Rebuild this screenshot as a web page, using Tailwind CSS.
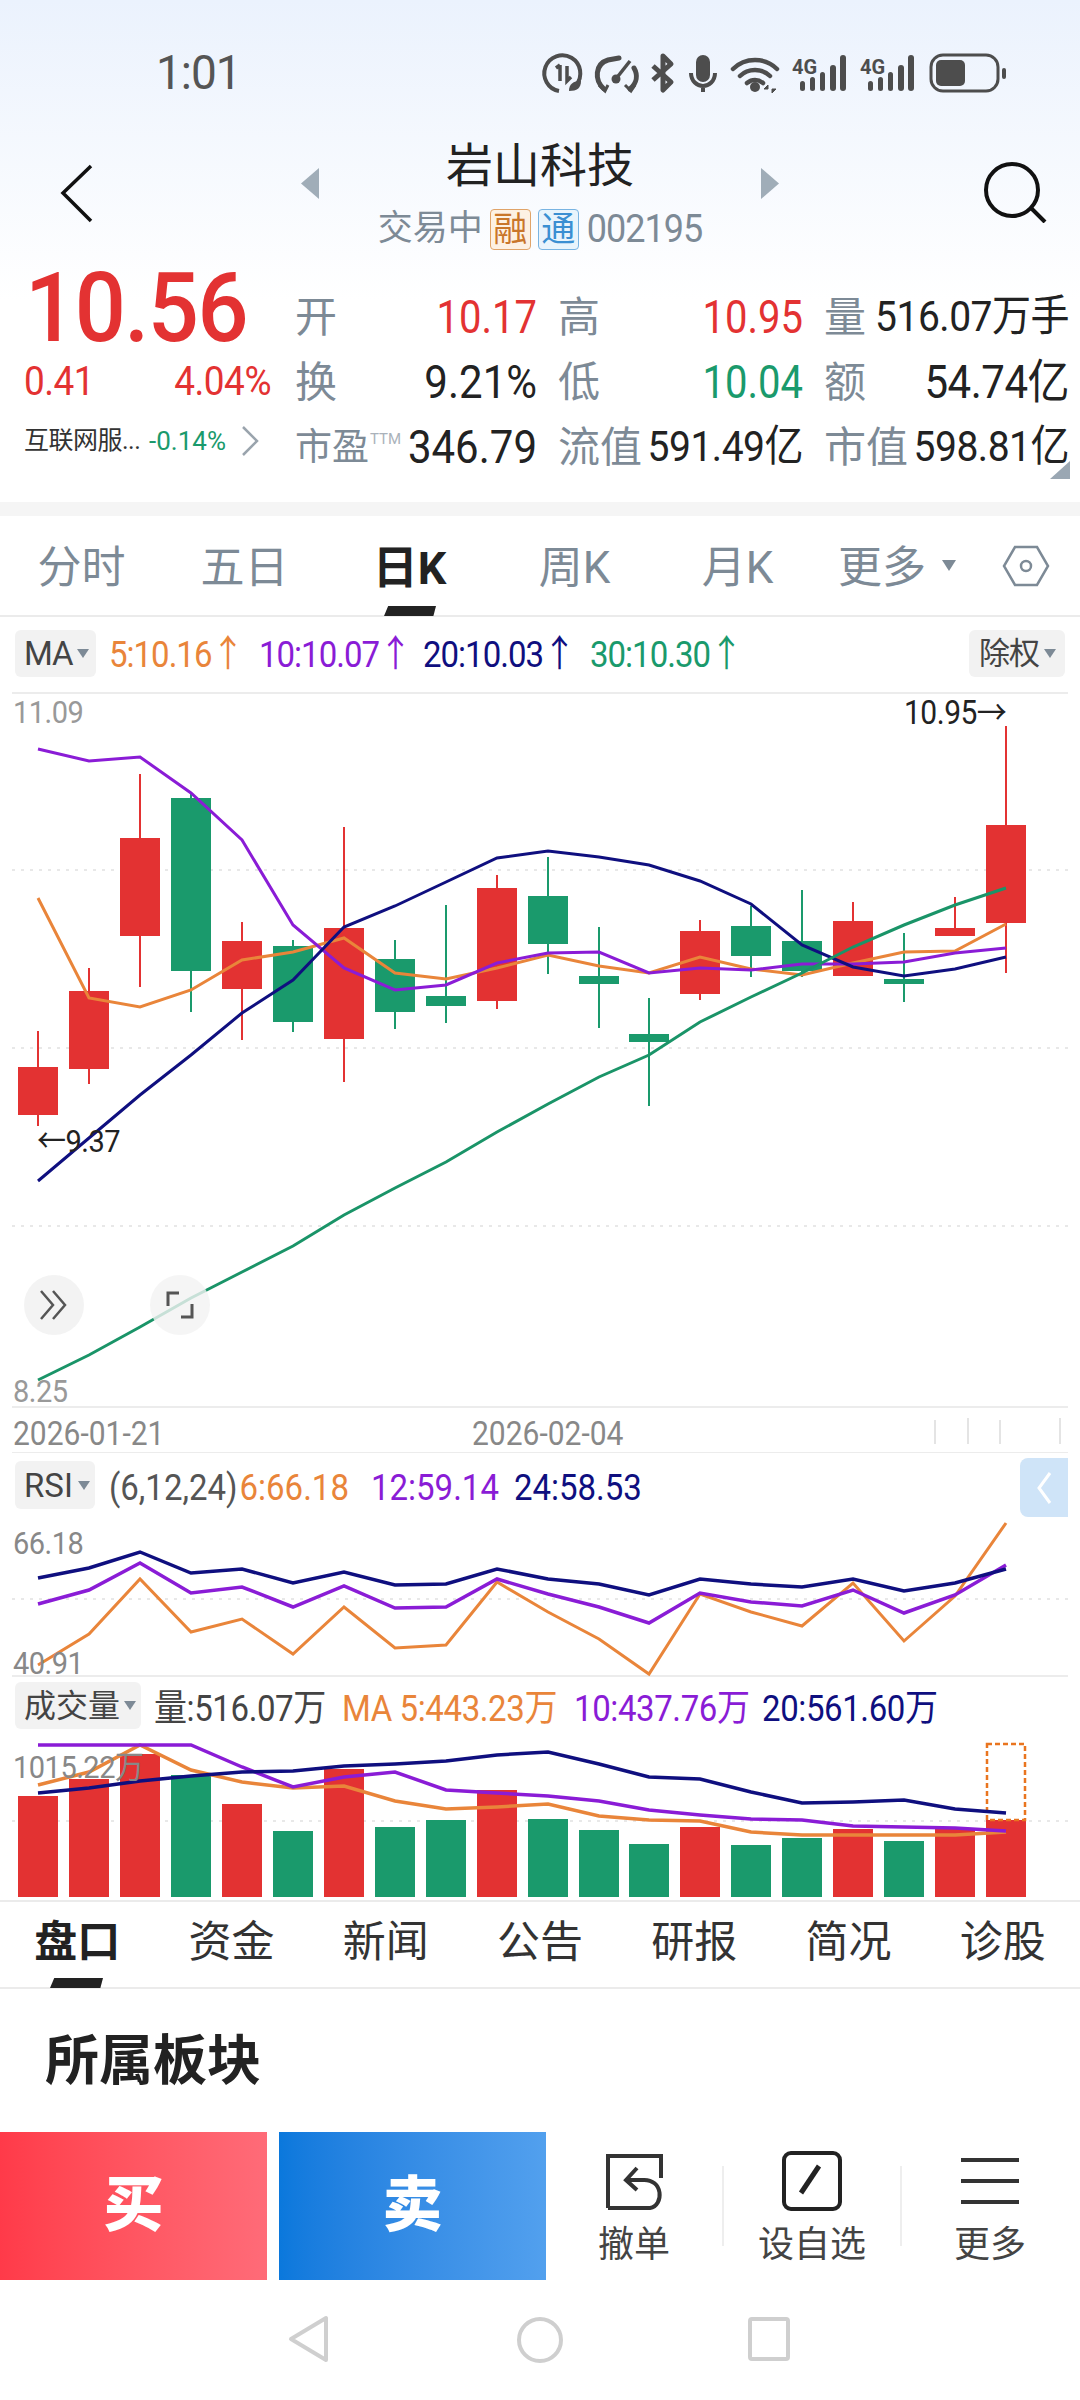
<!DOCTYPE html>
<html><head><meta charset="utf-8"><script src="https://cdn.jsdelivr.net/npm/@tailwindcss/browser@4"></script></head>
<body class="bg-white">
<div class="w-[1080px] h-[2400px] overflow-hidden bg-white text-[#222] font-['Roboto','Noto_Sans_CJK_SC',sans-serif]">

<!-- header -->
<div class="h-[300px] bg-gradient-to-b from-[#ebf2fd] to-white">
  <div class="h-[146px] flex items-center pb-[3px] relative">
    <div class="ml-[156px] text-[46px] leading-none text-[#555] tracking-[-1px] scale-y-[1.06]">1:01</div>
    <svg class="absolute left-[540px] top-[40px]" width="480" height="70" viewBox="540 40 480 70" fill="none" stroke="#4d4d4d">
      <path d="M576 85a18 18 0 1 0-17 6" stroke-width="4"/><path d="M560 65l-4 3M560 65v16M567 66v15l4-4" stroke-width="3.5"/><path d="M569 91c0-7 4-10 12-10 0 7-4 10-12 10z" fill="#4d4d4d" stroke="none"/>
      <path d="M604 89c-10-9-9-25 4-29l11-2M634 68c4 7 3 15-4 21" stroke-width="5" stroke-linecap="round"/><path d="M615 80l15-19" stroke-width="3.500"/><circle cx="616" cy="79" r="4.500" fill="#4d4d4d" stroke="none"/><path d="M599 85l6 6 3-6M625 85l6 6 4-6" stroke-width="3"/>
      <path d="M653 66l18 16-8 8V56l8 8-18 16" stroke-width="5" stroke-linejoin="round"/>
      <rect x="696" y="55" width="14" height="27" rx="7" fill="#4d4d4d" stroke="none"/><path d="M691 73c0 8 6 13 12 13s12-5 12-13M703 86v6" stroke-width="4"/>
      <path d="M733 69c12-12 32-12 44 0M740 76c8-8 22-8 30 0M747 83c5-4 11-4 16 0" stroke-width="4.5" stroke-linecap="round"/><circle cx="755" cy="87" r="5" fill="#4d4d4d" stroke="none"/><path d="M768 85l-4 4h4zM772 93l4-4h-4z" fill="#4d4d4d" stroke-width="1"/>
      <g fill="#4d4d4d" stroke="none"><rect x="800" y="81" width="5" height="10" rx="2.5"/><rect x="810" y="77" width="5" height="14" rx="2.5"/><rect x="820" y="72" width="5" height="19" rx="2.5"/><rect x="830" y="65" width="6" height="26" rx="3"/><rect x="840" y="55" width="6" height="36" rx="3"/>
      <rect x="868" y="81" width="5" height="10" rx="2.5"/><rect x="878" y="77" width="5" height="14" rx="2.5"/><rect x="888" y="72" width="5" height="19" rx="2.5"/><rect x="898" y="65" width="6" height="26" rx="3"/><rect x="908" y="55" width="6" height="36" rx="3"/>
      <text x="792" y="74" font-size="20" font-weight="700" font-family="Roboto">4G</text><text x="860" y="74" font-size="20" font-weight="700" font-family="Roboto">4G</text></g>
      <rect x="931" y="55" width="67" height="36" rx="12" stroke-width="3"/><rect x="936" y="60" width="29" height="26" rx="5" fill="#4d4d4d" stroke="none"/><rect x="1002" y="68" width="4" height="11" rx="2" fill="#4d4d4d" stroke="none"/>
    </svg>
  </div>
  <div class="h-[116px] relative flex flex-col items-center">
    <svg class="absolute left-[60px] top-[17px]" width="34" height="60" viewBox="0 0 34 60" fill="none" stroke="#111" stroke-width="3.5"><path d="M31 3L3 30l28 28"/></svg>
    <svg class="absolute left-[300px] top-[21px]" width="20" height="33" viewBox="0 0 20 33" fill="#a0adb8"><path d="M19 1v31L1 16.500z"/></svg>
    <svg class="absolute left-[760px] top-[21px]" width="20" height="33" viewBox="0 0 20 33" fill="#a0adb8"><path d="M1 1v31l18-15.500z"/></svg>
    <svg class="absolute left-[980px] top-[15px]" width="70" height="62" viewBox="0 0 70 62" fill="none" stroke="#111" stroke-width="4"><circle cx="32" cy="29" r="26"/><path d="M51 47l14 14"/></svg>
    <div class="text-[47px] leading-[52px] mt-[-6px] text-[#222]">岩山科技</div>
    <div class="flex items-center mt-[16px] text-[#7d8a96]">
      <span class="text-[35px] leading-[42px] mr-[7px]">交易中</span>
      <span class="w-[41px] h-[41px] rounded-[4px] border border-[#e0a469] bg-[#fdf1e3] text-[#c9762a] text-[34px] leading-[38px] text-center mr-[7px]">融</span>
      <span class="w-[41px] h-[41px] rounded-[4px] border border-[#79b4e2] bg-[#e9f4fc] text-[#3b8fd2] text-[34px] leading-[38px] text-center mr-[8px]">通</span>
      <span class="text-[36px] leading-[42px] tracking-[-1px] scale-y-[1.08]">002195</span>
    </div>
  </div>
  <!-- quote -->
  <div class="flex h-[240px] mt-[-4px] relative">
    <div class="w-[295px] pl-[24px] shrink-0">
      <div class="text-[90px] leading-[98px] font-medium text-[#e33232] tracking-[-1.500px] mt-[2px] ml-[1px] scale-y-[1.08] origin-center">10.56</div>
      <div class="flex justify-between w-[247px] text-[37px] leading-[44px] text-[#e33232] mt-[2px] tracking-[-0.5px]"><span class="scale-y-[1.1]">0.41</span><span class="scale-y-[1.1]">4.04%</span></div>
      <div class="flex items-center text-[25px] leading-[40px] mt-[17px]"><span class="text-[#333] w-[125px] tracking-[-0.5px]">互联网服...</span><span class="text-[#1a9a6c] text-[26px]">-0.14%</span>
        <svg class="ml-[15px]" width="18" height="32" viewBox="0 0 18 32" fill="none" stroke="#9aa4ad" stroke-width="2.500"><path d="M2 2l14 14L2 30"/></svg></div>
    </div>
    <div class="grid grid-cols-[242px_245px_245px] grid-rows-[65px_65px_65px] gap-x-[21px] h-[195px] text-[42px] leading-none text-[#222] mt-[27px]">
      <div class="flex justify-between items-center"><span class="text-[#7d8a96]">开</span><span class="text-[#e33232] text-[40px] scale-y-[1.14]">10.17</span></div>
      <div class="flex justify-between items-center"><span class="text-[#7d8a96]">高</span><span class="text-[#e33232] text-[40px] scale-y-[1.14]">10.95</span></div>
      <div class="flex justify-between items-center"><span class="text-[#7d8a96]">量</span><span class="text-[39px] tracking-[-0.5px] scale-y-[1.1]">516.07万手</span></div>
      <div class="flex justify-between items-center"><span class="text-[#7d8a96]">换</span><span class="scale-y-[1.1]">9.21%</span></div>
      <div class="flex justify-between items-center"><span class="text-[#7d8a96]">低</span><span class="text-[#1a9a6c] text-[40px] scale-y-[1.14]">10.04</span></div>
      <div class="flex justify-between items-center"><span class="text-[#7d8a96]">额</span><span class="tracking-[-0.5px] scale-y-[1.1]">54.74亿</span></div>
      <div class="flex justify-between items-center"><span class="text-[#7d8a96] text-[37px] flex items-start">市盈<span class="text-[15px] mt-[3px] ml-[1px] text-[#aab2ba]">TTM</span></span><span class="scale-y-[1.1]">346.79</span></div>
      <div class="flex justify-between items-center"><span class="text-[#7d8a96]">流值</span><span class="text-[39px] tracking-[-0.5px] scale-y-[1.1]">591.49亿</span></div>
      <div class="flex justify-between items-center"><span class="text-[#7d8a96]">市值</span><span class="text-[39px] tracking-[-0.5px] scale-y-[1.1]">598.81亿</span></div>
    </div>
    <svg class="absolute left-[1050px] top-[203px]" width="20" height="18" viewBox="0 0 20 18" fill="#9aa7b3"><path d="M20 0v18H0z"/></svg>
  </div>
</div>
<div class="h-[216px]"></div>
<div class="h-[14px] bg-[#f5f5f5] mt-[-14px]"></div>

<!-- period tabs -->
<div class="h-[101px] border-b-2 border-[#ebebeb] relative flex text-[44px] leading-none text-[#7d8a96]">
  <div class="w-[163px] text-center pt-[30px]">分时</div>
  <div class="w-[163px] text-center pt-[30px]">五日</div>
  <div class="w-[167px] text-center pt-[30px] text-[#222] font-bold"><span class="text-[45px]">日K</span></div>
  <div class="w-[163px] text-center pt-[30px]">周K</div>
  <div class="w-[163px] text-center pt-[30px]">月K</div>
  <div class="w-[177px] pt-[30px] flex items-start pl-[19px]"><span>更多</span><span class="ml-[16px] mt-[14px] w-0 h-0 border-x-[7px] border-t-[11px] border-x-transparent border-t-[#7d8a96]"></span></div>
  <svg class="absolute left-[1002px] top-[29px]" width="48" height="42" viewBox="0 0 48 42" fill="none" stroke="#7d8a96" stroke-width="2.500"><path d="M13 2h22l11 19-11 19H13L2 21z"/><circle cx="24" cy="21" r="5"/></svg>
  <div class="absolute left-[384px] top-[90px] w-[52px] h-[10px] bg-[#222] [clip-path:polygon(8%_0,100%_0,95%_100%,0_100%)]"></div>
</div>

<!-- MA toolbar -->
<div class="h-[75px] flex items-center px-[15px] text-[33px] leading-none tracking-[-1px]">
  <div class="w-[81px] h-[47px] bg-[#f2f2f2] rounded-[6px] flex items-center pl-[9px] text-[#444] mr-[13px] mt-[-3px]">MA<span class="ml-[4px] w-0 h-0 border-x-[6px] border-t-[9px] border-x-transparent border-t-[#7d8a96]"></span></div>
  <span class="text-[#e9853a] w-[150px] scale-y-[1.12]">5:10.16↑</span>
  <span class="text-[#8a1cd6] w-[164px] scale-y-[1.12]">10:10.07↑</span>
  <span class="text-[#0f0f7f] w-[167px] scale-y-[1.12]">20:10.03↑</span>
  <span class="text-[#1a9a6c] scale-y-[1.12]">30:10.30↑</span>
  <div class="ml-auto w-[96px] h-[47px] bg-[#f2f2f2] rounded-[6px] flex items-center pl-[10px] text-[#444] text-[31px] mt-[-3px]">除权<span class="ml-[5px] w-0 h-0 border-x-[6px] border-t-[9px] border-x-transparent border-t-[#7d8a96]"></span></div>
</div>

<!-- main chart -->
<div class="relative h-[761px]">
  <svg class="block" width="1080" height="761" viewBox="0 692 1080 761" fill="none">
    <path d="M12 693h1056M12 1407h1056M12 1453h1056" stroke="#ececec" stroke-width="2"/>
    <path d="M12 870h1056M12 1048h1056M12 1226h1056" stroke="#e8e8e8" stroke-width="2" stroke-dasharray="3 6"/>
    <g stroke="#e33232" stroke-width="2">
      <path d="M38 1031v95M89 968v116M140 774v213M242 922v118M344 827v255M497 875v134M700 920v80M853 902v74M955 897v39M1006 726v247"/>
    </g>
    <g fill="#e33232">
      <rect x="18" y="1067" width="40" height="48"/><rect x="69" y="991" width="40" height="78"/><rect x="120" y="838" width="40" height="98"/><rect x="222" y="941" width="40" height="48"/><rect x="324" y="928" width="40" height="111"/><rect x="477" y="888" width="40" height="113"/><rect x="680" y="931" width="40" height="63"/><rect x="833" y="921" width="40" height="55"/><rect x="935" y="928" width="40" height="8"/><rect x="986" y="825" width="40" height="98"/>
    </g>
    <g stroke="#1a9a6c" stroke-width="2">
      <path d="M191 793v219M293 940v92M395 940v89M446 905v118M548 857v117M599 927v101M649 998v108M751 906v71M802 890v87M904 933v69"/>
    </g>
    <g fill="#1a9a6c">
      <rect x="171" y="798" width="40" height="173"/><rect x="273" y="946" width="40" height="76"/><rect x="375" y="959" width="40" height="53"/><rect x="426" y="996" width="40" height="10"/><rect x="528" y="896" width="40" height="48"/><rect x="579" y="976" width="40" height="8"/><rect x="629" y="1034" width="40" height="8"/><rect x="731" y="926" width="40" height="30"/><rect x="782" y="941" width="40" height="30"/><rect x="884" y="979" width="40" height="5"/>
    </g>
    <polyline stroke="#e9853a" stroke-width="3" points="38,898 89,998 140,1007 191,990 242,960 293,952 344,938 395,973 446,979 497,968 548,955 599,966 649,973 700,957 751,969 802,975 853,963 904,952 955,951 1006,924"/>
    <polyline stroke="#8a1cd6" stroke-width="3" points="38,749 89,761 140,757 191,793 242,840 293,925 344,968 395,990 446,985 497,963 548,953 599,952 649,973 700,968 751,970 802,964 853,964 904,962 955,953 1006,948"/>
    <polyline stroke="#0f0f7f" stroke-width="3" points="38,1181 89,1138 140,1095 191,1055 242,1013 293,980 344,927 395,906 446,882 497,858 548,851 599,857 649,865 700,881 751,904 802,945 853,967 904,976 955,969 1006,957"/>
    <polyline stroke="#1a9468" stroke-width="3" points="38,1380 89,1355 140,1327 191,1298 242,1272 293,1246 344,1215 395,1188 446,1162 497,1132 548,1104 599,1077 649,1055 700,1022 751,997 802,973 853,947 904,925 955,905 1006,888"/>
    <g stroke="#e4e4e4" stroke-width="2"><path d="M935 1420v24M968 1418v26M1000 1420v24M1060 1418v26"/></g>
  </svg>
  <span class="absolute left-[13px] top-[4px] text-[29px] leading-[32px] text-[#999] tracking-[-0.5px] scale-y-[1.1]">11.09</span>
  <span class="absolute left-[904px] top-[5px] text-[30px] leading-[32px] text-[#222] tracking-[-0.5px] scale-y-[1.1]">10.95→</span>
  <span class="absolute left-[37px] top-[433px] text-[29px] leading-[32px] text-[#222] tracking-[-0.5px] scale-y-[1.1]">←9.37</span>
  <span class="absolute left-[13px] top-[683px] text-[29px] leading-[32px] text-[#999] tracking-[-0.5px] scale-y-[1.1]">8.25</span>
  <span class="absolute left-[13px] top-[724px] text-[30px] leading-[36px] text-[#888] scale-y-[1.1]">2026-01-21</span>
  <span class="absolute left-[472px] top-[724px] text-[30px] leading-[36px] text-[#888] scale-y-[1.1]">2026-02-04</span>
  <div class="absolute left-[24px] top-[583px] w-[60px] h-[60px] rounded-full bg-[#f2f2f2]/90 flex items-center justify-center">
    <svg width="30" height="30" viewBox="0 0 30 30" fill="none" stroke="#555" stroke-width="2.500"><path d="M2 1l12 14L2 29M14 1l12 14-12 14"/></svg></div>
  <div class="absolute left-[150px] top-[583px] w-[60px] h-[60px] rounded-full bg-[#f2f2f2]/80 flex items-center justify-center">
    <svg width="28" height="28" viewBox="0 0 28 28" fill="none" stroke="#555" stroke-width="3"><path d="M13 2H2v13M15 26h11V13"/></svg></div>
</div>

<!-- RSI toolbar -->
<div class="h-[64px] relative flex items-center px-[15px] text-[33px] leading-none pt-[4px]">
  <div class="w-[80px] h-[48px] bg-[#f2f2f2] rounded-[6px] flex items-center pl-[9px] text-[#444] mr-[14px] mt-[-4px]">RSI<span class="ml-[5px] w-0 h-0 border-x-[6px] border-t-[9px] border-x-transparent border-t-[#7d8a96]"></span></div>
  <span class="text-[#555] mr-[2px] scale-y-[1.12]">(6,12,24)</span>
  <span class="text-[#e9853a] mr-[22px] scale-y-[1.12]">6:66.18</span>
  <span class="text-[#8a1cd6] mr-[15px] scale-y-[1.12]">12:59.14</span>
  <span class="text-[#0f0f7f] scale-y-[1.12]">24:58.53</span>
  <div class="absolute left-[1020px] top-[5px] w-[48px] h-[59px] bg-[#cfe4f8] rounded-l-[8px] flex items-center justify-center">
    <svg width="16" height="32" viewBox="0 0 16 32" fill="none" stroke="#fff" stroke-width="3"><path d="M14 1L3 16l11 15"/></svg></div>
</div>

<!-- RSI chart -->
<div class="relative h-[160px]">
  <svg class="block" width="1080" height="160" viewBox="0 1517 1080 160" fill="none">
    <path d="M12 1599h1056" stroke="#e8e8e8" stroke-width="2" stroke-dasharray="3 6"/>
    <path d="M12 1676h1056" stroke="#ececec" stroke-width="2"/>
    <polyline stroke="#e9853a" stroke-width="3" points="38,1665 89,1634 140,1579 191,1632 242,1619 293,1654 344,1607 395,1648 446,1645 497,1582 548,1612 599,1639 649,1674 700,1594 751,1612 802,1626 853,1583 904,1641 955,1596 1006,1523"/>
    <polyline stroke="#8a1cd6" stroke-width="3.500" points="38,1604 89,1590 140,1563 191,1593 242,1587 293,1607 344,1586 395,1608 446,1607 497,1579 548,1594 599,1607 649,1623 700,1593 751,1602 802,1606 853,1590 904,1613 955,1595 1006,1565"/>
    <polyline stroke="#0f0f7f" stroke-width="3.500" points="38,1578 89,1568 140,1552 191,1573 242,1569 293,1583 344,1572 395,1585 446,1584 497,1569 548,1579 599,1584 649,1595 700,1579 751,1584 802,1587 853,1579 904,1591 955,1583 1006,1569"/>
  </svg>
  <span class="absolute left-[13px] top-[10px] text-[29px] leading-[32px] text-[#888] tracking-[-0.5px] scale-y-[1.1]">66.18</span>
  <span class="absolute left-[13px] top-[130px] text-[29px] leading-[32px] text-[#888] tracking-[-0.5px] scale-y-[1.1]">40.91</span>
</div>

<!-- Volume toolbar -->
<div class="h-[63px] flex items-center px-[15px] text-[33px] leading-none tracking-[-0.4px]">
  <div class="w-[126px] h-[47px] bg-[#f2f2f2] rounded-[6px] flex items-center pl-[9px] text-[#444] text-[32px] tracking-normal mr-[13px] mt-[-6px]">成交量<span class="ml-[4px] w-0 h-0 border-x-[6px] border-t-[9px] border-x-transparent border-t-[#7d8a96]"></span></div>
  <span class="text-[#444] w-[188px] scale-y-[1.12]">量:516.07万</span>
  <span class="text-[#e9853a] w-[232px] scale-y-[1.12]">MA 5:443.23万</span>
  <span class="text-[#8a1cd6] w-[188px] scale-y-[1.12]">10:437.76万</span>
  <span class="text-[#0f0f7f] scale-y-[1.12]">20:561.60万</span>
</div>

<!-- Volume chart -->
<div class="relative h-[160px]">
  <svg class="block" width="1080" height="160" viewBox="0 1740 1080 160" fill="none">
    <path d="M12 1821h1056" stroke="#e8e8e8" stroke-width="2" stroke-dasharray="3 6"/>
    <g fill="#e33232"><rect x="18" y="1796" width="40" height="101"/><rect x="69" y="1779" width="40" height="118"/><rect x="120" y="1754" width="40" height="143"/><rect x="222" y="1804" width="40" height="93"/><rect x="324" y="1769" width="40" height="128"/><rect x="477" y="1790" width="40" height="107"/><rect x="680" y="1827" width="40" height="70"/><rect x="833" y="1829" width="40" height="68"/><rect x="935" y="1829" width="40" height="68"/><rect x="986" y="1820" width="40" height="77"/></g>
    <g fill="#1a9a6c"><rect x="171" y="1775" width="40" height="122"/><rect x="273" y="1831" width="40" height="66"/><rect x="375" y="1827" width="40" height="70"/><rect x="426" y="1820" width="40" height="77"/><rect x="528" y="1819" width="40" height="78"/><rect x="579" y="1830" width="40" height="67"/><rect x="629" y="1844" width="40" height="53"/><rect x="731" y="1845" width="40" height="52"/><rect x="782" y="1838" width="40" height="59"/><rect x="884" y="1841" width="40" height="56"/></g>
    <rect x="987" y="1744" width="38" height="76" stroke="#e9751f" stroke-width="2.500" stroke-dasharray="5 3"/>
    <polyline stroke="#e9853a" stroke-width="3.500" points="38,1785 89,1772 140,1745 191,1770 242,1782 293,1788 344,1786 395,1801 446,1809 497,1807 548,1804 599,1816 649,1820 700,1821 751,1832 802,1835 853,1835 904,1835 955,1835 1006,1832"/>
    <polyline stroke="#8a1cd6" stroke-width="3.500" points="38,1745 89,1745 140,1745 191,1745 242,1767 293,1787 344,1777 395,1772 446,1790 497,1793 548,1796 599,1801 649,1810 700,1815 751,1819 802,1820 853,1826 904,1827 955,1828 1006,1831"/>
    <polyline stroke="#0f0f7f" stroke-width="3.500" points="38,1793 89,1788 140,1781 191,1776 242,1772 293,1771 344,1766 395,1764 446,1761 497,1755 548,1752 599,1764 649,1777 700,1779 751,1792 802,1803 853,1802 904,1800 955,1809 1006,1813"/>
  </svg>
  <span class="absolute left-[13px] top-[11px] text-[29px] leading-[32px] text-[#888] tracking-[-0.5px] scale-y-[1.1]">1015.22万</span>
</div>

<!-- detail tabs -->
<div class="h-[89px] border-t-2 border-b-2 border-[#ebebeb] relative grid grid-cols-7 text-[43px] leading-none text-[#333] text-center pt-[19px]">
  <span class="font-bold text-[#222]">盘口</span><span>资金</span><span>新闻</span><span>公告</span><span>研报</span><span>简况</span><span>诊股</span>
  <div class="absolute left-[50px] top-[76px] w-[53px] h-[10px] bg-[#222] [clip-path:polygon(8%_0,100%_0,95%_100%,0_100%)]"></div>
</div>
<div class="h-[143px] pl-[45px] pt-[43px] text-[54px] leading-[60px] font-bold text-[#222]">所属板块</div>

<!-- action bar -->
<div class="h-[148px] flex items-stretch relative">
  <div class="w-[267px] bg-gradient-to-r from-[#ff3a49] to-[#ff6b78] flex items-center justify-center text-white text-[60px] font-black">买</div>
  <div class="w-[267px] ml-[12px] bg-gradient-to-r from-[#0a78dc] to-[#52a0ee] flex items-center justify-center text-white text-[60px] font-black">卖</div>
  <div class="w-[176px] flex flex-col items-center text-[36px] leading-[38px] text-[#444] pt-[21px] border-r-0">
    <svg width="60" height="58" viewBox="0 0 60 58" fill="none" stroke="#333" stroke-width="4"><path d="M4 55V3h53v22M4 55h42c14-2 14-30-8-28H24"/><path d="M33 15L22 27l11 10"/></svg>
    <span class="mt-[15px]">撤单</span></div>
  <div class="w-[2px] h-[80px] bg-[#eeeeee] mt-[34px]"></div>
  <div class="w-[176px] flex flex-col items-center text-[36px] leading-[38px] text-[#444] pt-[18px]">
    <svg width="62" height="62" viewBox="0 0 62 62" fill="none" stroke="#222" stroke-width="4"><rect x="3" y="3" width="56" height="56" rx="7"/><path d="M20 43l18-27" stroke-width="5"/></svg>
    <span class="mt-[14px]">设自选</span></div>
  <div class="w-[2px] h-[80px] bg-[#eeeeee] mt-[34px]"></div>
  <div class="w-[176px] flex flex-col items-center text-[36px] leading-[38px] text-[#444] pt-[25px]">
    <svg width="60" height="48" viewBox="0 0 60 48" fill="none" stroke="#333" stroke-width="4"><path d="M1 3h58M1 24h58M1 45h58"/></svg>
    <span class="mt-[21px]">更多</span></div>
</div>

<!-- nav bar -->
<div class="h-[120px] relative flex">
  <svg class="absolute left-[288px] top-[35px]" width="42" height="48" viewBox="0 0 42 48" fill="none" stroke="#cfcfcf" stroke-width="4" stroke-linejoin="round"><path d="M38 3v42L3 24z"/></svg>
  <svg class="absolute left-[516px] top-[36px]" width="48" height="48" viewBox="0 0 48 48" fill="none" stroke="#cfcfcf" stroke-width="4"><circle cx="24" cy="24" r="21"/></svg>
  <svg class="absolute left-[748px] top-[37px]" width="42" height="44" viewBox="0 0 42 44" fill="none" stroke="#cfcfcf" stroke-width="4"><rect x="2" y="2" width="38" height="40" rx="2"/></svg>
</div>
</div>
</body></html>
